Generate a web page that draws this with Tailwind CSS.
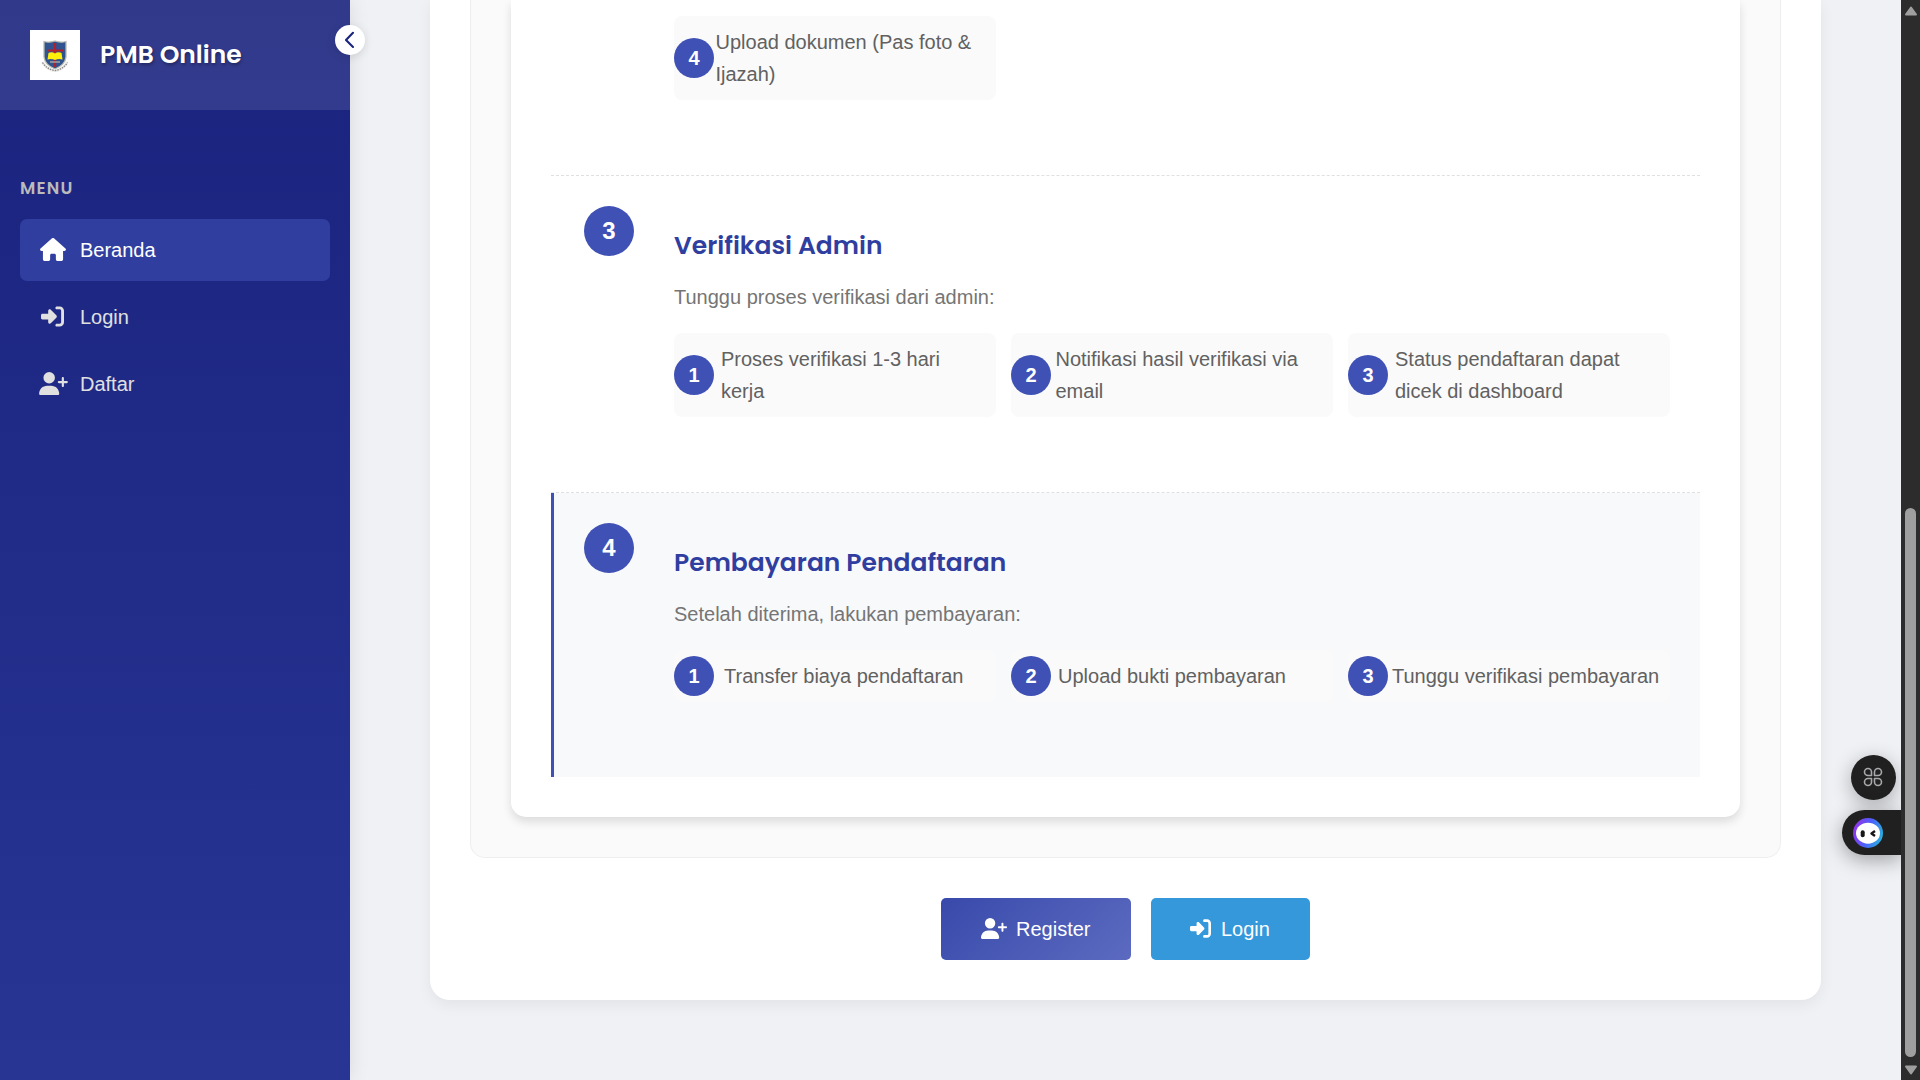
<!DOCTYPE html>
<html lang="id">
<head>
<meta charset="utf-8">
<title>PMB Online</title>
<script src="https://cdn.jsdelivr.net/npm/@tailwindcss/browser@4"></script>
</head>
<body class="relative h-[1080px] w-[1920px] overflow-hidden bg-[#eff1f5] font-['Liberation_Sans',sans-serif] text-[20px] leading-8">
<svg class="hidden">
  <symbol id="house" viewBox="0 0 576 512"><path fill="currentColor" d="M575.8 255.5c0 18-15 32.1-32 32.1h-32l.7 160.2c0 2.7-.2 5.4-.5 8.1V472c0 22.1-17.9 40-40 40H456c-1.1 0-2.2 0-3.3-.1c-1.4 .1-2.8 .1-4.2 .1H416 392c-22.1 0-40-17.9-40-40V448 384c0-17.7-14.3-32-32-32H256c-17.7 0-32 14.3-32 32v64 24c0 22.1-17.9 40-40 40H160 128.1c-1.5 0-3-.1-4.5-.2c-1.2 .1-2.4 .2-3.6 .2H104c-22.1 0-40-17.9-40-40V360c0-.9 0-1.9 .1-2.8V287.6H32c-18 0-32-14-32-32.1c0-9 3-17 10-24L266.4 8c7-7 15-8 22-8s15 2 21 7L564.8 231.5c8 7 12 15 11 24z"/></symbol>
  <symbol id="login" viewBox="0 0 512 512"><path fill="currentColor" d="M217.9 105.9L340.7 228.7c7.2 7.2 11.3 17.1 11.3 27.3s-4.1 20.1-11.3 27.3L217.9 406.1c-6.4 6.4-15 9.9-24 9.9c-18.7 0-33.9-15.2-33.9-33.9l0-62.1L32 320c-17.7 0-32-14.3-32-32l0-64c0-17.7 14.3-32 32-32l128 0 0-62.1c0-18.7 15.2-33.9 33.9-33.9c9 0 17.6 3.6 24 9.9zM352 416l64 0c17.7 0 32-14.3 32-32l0-256c0-17.7-14.3-32-32-32l-64 0c-17.7 0-32-14.3-32-32s14.3-32 32-32l64 0c53 0 96 43 96 96l0 256c0 53-43 96-96 96l-64 0c-17.7 0-32-14.3-32-32s14.3-32 32-32z"/></symbol>
  <symbol id="user-plus" viewBox="0 0 640 512"><path fill="currentColor" d="M96 128a128 128 0 1 1 256 0A128 128 0 1 1 96 128zM0 482.3C0 383.8 79.8 304 178.3 304h91.4C368.2 304 448 383.8 448 482.3c0 16.4-13.3 29.7-29.7 29.7H29.7C13.3 512 0 498.7 0 482.3zM504 312V248H440c-13.3 0-24-10.7-24-24s10.7-24 24-24h64V136c0-13.3 10.7-24 24-24s24 10.7 24 24v64h64c13.3 0 24 10.7 24 24s-10.7 24-24 24H552v64c0 13.3-10.7 24-24 24s-24-10.7-24-24z"/></symbol>
</svg>

<div class="flex h-full">
  <aside class="relative z-10 h-full w-[350px] shrink-0 bg-linear-to-b from-[#1a237e] to-[#283593] shadow-[0_0_19px_rgba(0,0,0,0.1)]">
    <header class="flex h-[110px] items-center gap-5 bg-white/10 px-[30px]">
      <div class="flex size-[50px] items-center justify-center bg-white">
        <svg class="mt-px h-[33px] w-[28px]" viewBox="0 0 28 33">
          <path d="M3 2.5Q8 4 14 2Q20 4 25 2.5V18Q24 26 14 30Q4 26 3 18Z" fill="#31538f" stroke="#b9bcae" stroke-width="1.3"/>
          <path d="M14 4V28M6 11.5H22" stroke="#b3202b" stroke-width="2.2"/>
          <path d="M7.5 14Q11 12.500 14 14.500Q17 12.500 20.500 14L21.500 20.500Q17.500 19.500 14 21Q10.500 19.500 6.500 20.500Z" fill="#ffef0a"/>
          <path d="M9 23H19" stroke="#a9ad9f" stroke-width="1.4"/>
          <path d="M1.500 23Q6 30.500 14 32Q22 30.500 26.500 23" fill="none" stroke="#eeeeea" stroke-width="3"/>
          <path d="M1.500 23.500Q6 30.500 14 31.500Q22 30.500 26.500 23.500" fill="none" stroke="#888" stroke-width="1.300" stroke-dasharray="1.500 1"/>
        </svg>
      </div>
      <h1 class="whitespace-nowrap font-['Poppins','Inter',sans-serif] text-[25px] font-semibold text-white [font-feature-settings:'cv11'] [text-shadow:1px_2px_3px_rgba(0,0,0,0.3)]">PMB Online</h1>
    </header>
    <button class="absolute top-[25px] -right-[15px] flex size-[30px] items-center justify-center rounded-full bg-white shadow-[0_2px_10px_rgba(0,0,0,0.12)]">
      <svg class="mr-[3px] mb-px h-[18px] w-[12px]" viewBox="0 0 12 18"><path d="M10 1.800L3 9L10 16" fill="none" stroke="#1a237e" stroke-width="2.100" stroke-linecap="round" stroke-linejoin="round"/></svg>
    </button>
    <nav class="flex flex-col gap-[5px] px-5 pt-[62px]">
      <h2 class="mb-[10px] font-['Poppins','Inter',sans-serif] text-[17px] font-semibold tracking-[1.25px] text-[#bbbbbb]">MENU</h2>
      <a class="flex h-[62px] items-center rounded-[7px] bg-[#303f9f] pl-5 text-white"><svg class="mr-[14px] mb-px h-[23px] w-[26px]"><use href="#house"/></svg>Beranda</a>
      <a class="flex h-[62px] items-center rounded-[7px] pl-[21px] text-[#e0e0e0]"><svg class="mr-4 mb-px size-[23px]"><use href="#login"/></svg>Login</a>
      <a class="flex h-[62px] items-center rounded-[7px] pl-[19px] text-[#e0e0e0]"><svg class="mr-[12px] mb-px h-[23px] w-[29px]"><use href="#user-plus"/></svg>Daftar</a>
    </nav>
  </aside>

  <main class="flex-1 pl-20">
    <div class="h-[1000px] w-[1391px] rounded-b-[20px] bg-white px-10 shadow-[0_5px_15px_rgba(0,0,0,0.06)]">
      <div class="h-[858px] rounded-b-[15px] border border-t-0 border-[#eeeeee] bg-[#fafafa] px-10">
        <div class="h-[817px] rounded-b-[15px] bg-white px-10 shadow-[0_5px_10px_rgba(0,0,0,0.12)]">

          <section class="h-44 border-b border-dashed border-[#e0e0e0] pt-4 pl-[123px]">
            <div class="flex h-[84px] w-[322px] items-center rounded-[8px] bg-[#fafafa]">
              <span class="flex size-10 shrink-0 items-center justify-center rounded-full bg-[#3f51b5] font-bold text-white">4</span>
              <p class="pl-[1.5px] whitespace-nowrap text-[#616161]">Upload dokumen (Pas foto &amp;<br>Ijazah)</p>
            </div>
          </section>

          <section class="flex h-[317px] gap-10 border-b border-dashed border-[#e0e0e0] pt-[30px] pl-[33px]">
            <span class="flex size-[50px] shrink-0 items-center justify-center rounded-full bg-[#3f51b5] text-[24px] font-bold text-white">3</span>
            <div class="pt-5">
              <h3 class="mb-[15px] h-10 font-['Poppins','Inter',sans-serif] text-[25px] leading-10 font-semibold whitespace-nowrap text-[#303f9f] [font-feature-settings:'cv11']">Verifikasi Admin</h3>
              <p class="mb-5 text-[#757575]">Tunggu proses verifikasi dari admin:</p>
              <div class="grid grid-cols-[322px_322px_322px] gap-[15px] text-[#616161]">
                <div class="flex h-[84px] items-center rounded-[8px] bg-[#fafafa]"><span class="flex size-10 shrink-0 items-center justify-center rounded-full bg-[#3f51b5] font-bold text-white">1</span><p class="pl-[7px] whitespace-nowrap">Proses verifikasi 1-3 hari<br>kerja</p></div>
                <div class="flex h-[84px] items-center rounded-[8px] bg-[#fafafa]"><span class="flex size-10 shrink-0 items-center justify-center rounded-full bg-[#3f51b5] font-bold text-white">2</span><p class="pl-[4.5px] whitespace-nowrap">Notifikasi hasil verifikasi via<br>email</p></div>
                <div class="flex h-[84px] items-center rounded-[8px] bg-[#fafafa]"><span class="flex size-10 shrink-0 items-center justify-center rounded-full bg-[#3f51b5] font-bold text-white">3</span><p class="pl-[7px] whitespace-nowrap">Status pendaftaran dapat<br>dicek di dashboard</p></div>
              </div>
            </div>
          </section>

          <section class="flex h-[284px] gap-10 border-l-[3px] border-[#3f51b5] bg-[#f8f9fb] pt-[30px] pl-[30px]">
            <span class="flex size-[50px] shrink-0 items-center justify-center rounded-full bg-[#3f51b5] text-[24px] font-bold text-white">4</span>
            <div class="pt-5">
              <h3 class="mb-[15px] h-10 font-['Poppins','Inter',sans-serif] text-[25px] leading-10 font-semibold whitespace-nowrap text-[#303f9f] [font-feature-settings:'cv11']">Pembayaran Pendaftaran</h3>
              <p class="mb-5 text-[#757575]">Setelah diterima, lakukan pembayaran:</p>
              <div class="grid grid-cols-[322px_322px_322px] gap-[15px] text-[#616161]">
                <div class="flex h-[52px] items-center rounded-[8px] bg-[#fafafa]"><span class="flex size-10 shrink-0 items-center justify-center rounded-full bg-[#3f51b5] font-bold text-white">1</span><p class="pl-[10px] whitespace-nowrap">Transfer biaya pendaftaran</p></div>
                <div class="flex h-[52px] items-center rounded-[8px] bg-[#fafafa]"><span class="flex size-10 shrink-0 items-center justify-center rounded-full bg-[#3f51b5] font-bold text-white">2</span><p class="pl-[7px] whitespace-nowrap">Upload bukti pembayaran</p></div>
                <div class="flex h-[52px] items-center rounded-[8px] bg-[#fafafa]"><span class="flex size-10 shrink-0 items-center justify-center rounded-full bg-[#3f51b5] font-bold text-white">3</span><p class="pl-[4px] whitespace-nowrap">Tunggu verifikasi pembayaran</p></div>
              </div>
            </div>
          </section>
        </div>
      </div>

      <div class="mt-10 flex justify-center gap-5 text-white">
        <button class="flex h-[62px] w-[190px] items-center rounded-[5px] bg-linear-135 from-[#3949ab] to-[#5c6bc0] pl-10"><svg class="mr-[9px] mb-px h-[21px] w-[26px]"><use href="#user-plus"/></svg>Register</button>
        <button class="flex h-[62px] w-[159px] items-center rounded-[5px] bg-[#3498db] pl-[39px]"><svg class="mr-[10px] mb-px size-[21px]"><use href="#login"/></svg>Login</button>
      </div>
    </div>
  </main>

  <div class="z-20 flex w-[19px] shrink-0 flex-col items-center bg-[#2c2c2c]">
    <svg class="mt-[5px] h-[12px] w-[14px]" viewBox="0 0 14 12"><path d="M7 2.500L12 9.500H2Z" fill="#9f9f9f" stroke="#9f9f9f" stroke-width="2" stroke-linejoin="round"/></svg>
    <div class="mt-[491px] h-[549px] w-[11px] rounded-full bg-[#9f9f9f]"></div>
    <svg class="mt-[7px] h-[12px] w-[14px]" viewBox="0 0 14 12"><path d="M7 9.500L12 2.500H2Z" fill="#9f9f9f" stroke="#9f9f9f" stroke-width="2" stroke-linejoin="round"/></svg>
  </div>
</div>

<!-- Floating assistant widgets -->
<div class="absolute top-[755px] left-[1851px] z-10 flex size-[45px] items-center justify-center rounded-full bg-[#202020] shadow-[0_5px_20px_rgba(0,0,0,0.3)]">
  <svg class="mr-px mb-px size-[20px]" viewBox="0 0 20 20" fill="none" stroke="#a8a8ac" stroke-width="1.600"><path d="M8.500 8.500H5A3.500 3.500 0 1 1 8.500 5ZM11.500 8.500V5A3.500 3.500 0 1 1 15 8.500ZM8.500 11.500V15A3.500 3.500 0 1 1 5 11.500ZM11.500 11.500H15A3.500 3.500 0 1 1 11.500 15Z" stroke-linejoin="round"/></svg>
</div>
<div class="absolute top-[810px] left-[1842px] z-10 flex h-[45px] w-[59px] items-center rounded-l-full bg-[#202020] pl-[11px] shadow-[0_5px_20px_rgba(0,0,0,0.35)]">
  <svg class="size-[30px]" viewBox="0 0 30 30">
    <defs><linearGradient id="ring" x1="0" y1=".4" x2="1" y2=".7"><stop offset="0" stop-color="#9233e8"/><stop offset=".5" stop-color="#4a62fa"/><stop offset="1" stop-color="#25b5dc"/></linearGradient></defs>
    <circle cx="15" cy="15" r="15" fill="url(#ring)"/>
    <ellipse cx="15" cy="15.200" rx="12" ry="10.500" fill="#fff"/>
    <rect x="7.700" y="12.300" width="4" height="7" rx="2" fill="#171717"/>
    <path d="M22 13L18.500 15.500L22 18" fill="none" stroke="#171717" stroke-width="2.400" stroke-linejoin="round"/>
  </svg>
</div>
</body>
</html>
